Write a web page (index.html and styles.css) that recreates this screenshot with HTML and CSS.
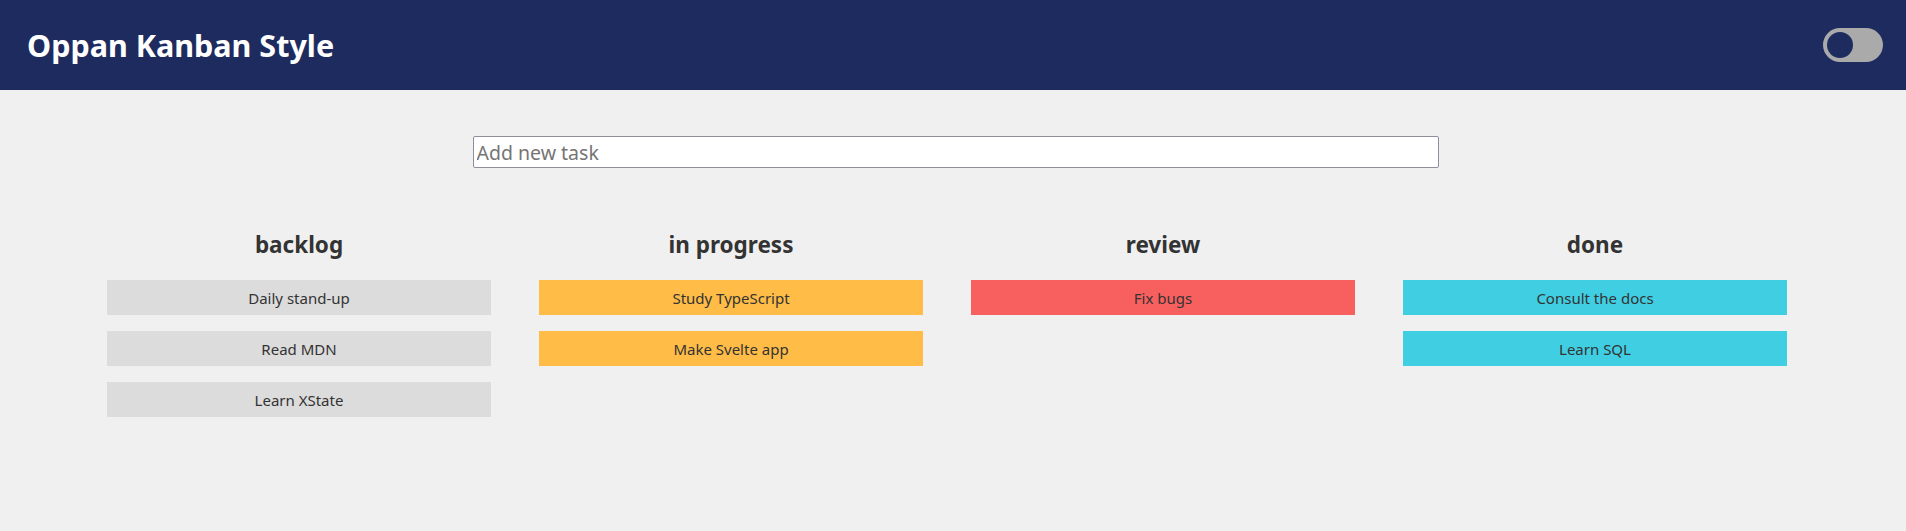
FILE: index.html
```html
<!DOCTYPE html>
<html lang="en">
<head>
<meta charset="utf-8">
<title>Oppan Kanban Style</title>
<link rel="stylesheet" href="styles.css">
</head>
<body>
<header class="topbar">
  <h1 class="title">Oppan Kanban Style</h1>
  <label class="toggle" aria-label="Toggle theme">
    <span class="toggle-knob"></span>
  </label>
</header>
<main class="main">
  <div class="add-row">
    <input class="add-input" type="text" placeholder="Add new task">
  </div>
  <section class="board">
    <div class="column">
      <h2 class="column-title">backlog</h2>
      <div class="card card-backlog">Daily stand-up</div>
      <div class="card card-backlog">Read MDN</div>
      <div class="card card-backlog">Learn XState</div>
    </div>
    <div class="column">
      <h2 class="column-title">in progress</h2>
      <div class="card card-progress">Study TypeScript</div>
      <div class="card card-progress">Make Svelte app</div>
    </div>
    <div class="column">
      <h2 class="column-title">review</h2>
      <div class="card card-review">Fix bugs</div>
    </div>
    <div class="column">
      <h2 class="column-title">done</h2>
      <div class="card card-done">Consult the docs</div>
      <div class="card card-done">Learn SQL</div>
    </div>
  </section>
</main>
</body>
</html>
```
FILE: styles.css
```css
* { box-sizing: border-box; }

html, body {
  margin: 0;
  padding: 0;
  background: #f0f0f0;
  font-family: "Noto Sans", "Open Sans", sans-serif;
  color: #333333;
}

.topbar {
  height: 90px;
  background: #1e2b5f;
  display: flex;
  align-items: center;
  justify-content: space-between;
  padding: 0 23px 0 27px;
}

.title {
  margin: 0;
  color: #ffffff;
  font-size: 30.5px;
  font-weight: 700;
  letter-spacing: 0;
}

.toggle {
  width: 60px;
  height: 34px;
  border-radius: 17px;
  background: #aaaaaa;
  display: flex;
  align-items: center;
  padding-left: 4px;
}

.toggle-knob {
  width: 26px;
  height: 26px;
  border-radius: 50%;
  background: #1e2b5f;
}

.main {
  padding-top: 46px;
}

.add-row {
  display: flex;
  justify-content: center;
  padding-left: 5px;
}

.add-input {
  width: 966px;
  height: 32px;
  border: 1px solid #8f8f9d;
  border-radius: 2px;
  background: #ffffff;
  padding: 0 3px;
  font-family: "Noto Sans", "Open Sans", sans-serif;
  font-size: 19.5px;
  color: #333;
}

.add-input::placeholder {
  color: #757575;
  opacity: 1;
}

.board {
  display: grid;
  grid-template-columns: repeat(4, 384px);
  column-gap: 48px;
  padding-left: 107px;
  margin-top: 62px;
}

.column {
  display: flex;
  flex-direction: column;
  gap: 16px;
}

.column-title {
  margin: 0 0 4px;
  text-align: center;
  font-size: 22.5px;
  line-height: 30px;
  font-weight: 700;
  color: #333333;
}

.card {
  height: 35px;
  display: flex;
  align-items: center;
  justify-content: center;
  font-size: 15px;
  color: #333333;
}

.card-backlog { background: #dcdcdc; }
.card-progress { background: #ffbc47; }
.card-review { background: #f85f5f; }
.card-done { background: #40cee2; }
```
